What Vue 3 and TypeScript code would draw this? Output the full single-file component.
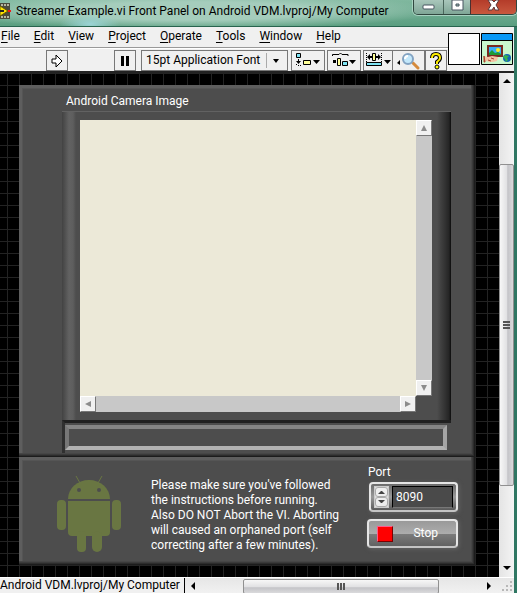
<script setup lang="ts">
import { ref } from 'vue'

const title = 'Streamer Example.vi Front Panel on Android VDM.lvproj/My Computer'
const menus = ['File', 'Edit', 'View', 'Project', 'Operate', 'Tools', 'Window', 'Help']
const port = ref('8090')
const font = ref('15pt Application Font')
const lines = [
  "Please make sure you've followed",
  'the instructions before running.',
  'Also DO NOT Abort the VI. Aborting',
  'will caused an orphaned port (self',
  'correcting after a few minutes).',
]

function step(delta: number) {
  port.value = String(Number(port.value) + delta)
}
</script>

<template>
  <div class="window">
    <header class="titlebar">
      <svg class="app-icon" width="11" height="16" viewBox="0 0 11 16">
        <path d="M0 0h10v16H0z" fill="#4a4a3c" />
        <path d="M1 1h2v2H1zM4 1h2v2H4zM7 1h2v2H7zM1 13h2v2H1zM4 13h2v2H4zM7 13h2v2H7z" fill="#b5b5a0" />
        <path d="M0 3 8 8 0 13z" fill="#ffe600" stroke="#6b5a00" />
        <path d="M8 7h3v2H8z" fill="#f01818" />
        <path d="M0 7h4v2H0z" fill="#222" />
      </svg>
      <h1>{{ title }}</h1>
      <div class="window-buttons">
        <button class="wb min" aria-label="Minimize">
          <svg width="13" height="13"><rect x="1" y="5" width="11" height="4" rx="1" fill="#fff" stroke="#485560" /></svg>
        </button>
        <button class="wb max" aria-label="Restore">
          <svg width="13" height="13"><path d="M1 0h11v10H1zM5 4v2h3V4z" fill="#fff" stroke="#485560" fill-rule="evenodd" /></svg>
        </button>
        <button class="wb close" aria-label="Close">
          <svg width="13" height="13" viewBox="0 0 13 13"><path d="M1 0h4l2 2 2-2h3L9 5l3 5H8L7 7l-2 3H1l3-5z" fill="#fff" stroke="#5b3a3c" /></svg>
        </button>
      </div>
    </header>

    <div class="body">
      <div class="tools">
        <div class="tools-main">
          <nav class="menubar">
            <a v-for="m in menus" :key="m" href="#"><u>{{ m[0] }}</u>{{ m.slice(1) }}</a>
          </nav>
          <div class="toolbar">
            <button class="tb run" aria-label="Run">
              <svg width="14" height="14"><path d="M2 5h4V1l6 6-6 6V9H2z" fill="#fff" stroke="#000" /></svg>
            </button>
            <button class="tb pause" aria-label="Pause">
              <svg width="12" height="12"><path d="M2 1h3v10H2zM7 1h3v10H7z" /></svg>
            </button>
            <div class="font-box">
              <select v-model="font" aria-label="Text settings">
                <option>15pt Application Font</option>
              </select>
              <svg width="8" height="6"><path d="M1 1h6L4 5z" /></svg>
            </div>
            <button class="tb wide" aria-label="Align objects">
              <svg width="24" height="15">
                <path d="M.5 1.500h4v4h-4z" fill="#7fe4f4" stroke="#000" />
                <path d="M2 7h1v4H2zM0 9h5l-2.500 3zM0 12h1v1H0zM2 13h1v1H2zM4 13h1v1H4z" />
                <path d="M7.500 8.500h7v4h-7z" fill="#ffff99" stroke="#000" />
                <path d="M17 8h7l-3.500 4z" />
              </svg>
            </button>
            <button class="tb wide" aria-label="Distribute objects">
              <svg width="24" height="15">
                <path d="M.5 4V2.500H7L8.500 1 10 2.500h6V4" fill="none" stroke="#000" />
                <path d="M1 8h3v3H1z" />
                <path d="M5.500 6.500h3v7h-3z" fill="#ffff99" stroke="#000" />
                <path d="M10.500 9.500h5v4h-5z" fill="#7fe4f4" stroke="#000" />
                <path d="M17 8h7l-3.500 4z" />
              </svg>
            </button>
            <button class="tb resize" aria-label="Resize objects">
              <svg width="25" height="15">
                <path d="M.5 1v9M15.500 1v9" fill="none" stroke="#000" stroke-dasharray="1 1" />
                <path d="M1 5l3-3v2h2v2H4v2zM15 5l-3-3v2h-2v2h2v2z" />
                <path d="M6.500 1.500h3v7h-3z" fill="#ffff99" stroke="#000" />
                <path d="M.5 10.500h15v3H.5z" fill="#7fe4f4" stroke="#000" />
                <path d="M18 8h7l-3.500 4z" />
              </svg>
            </button>
            <button class="tb search" aria-label="Search">
              <svg width="26" height="20" viewBox="0 0 26 20">
                <path d="M4 9v5l-3-2z" />
                <path d="m17 12 5 5" stroke="#d58a3c" stroke-width="3" stroke-linecap="round" />
                <circle cx="12" cy="8" r="5" fill="#c3e8fb" stroke="#83a3c2" stroke-width="2" />
                <path d="M9 8q0-3 3-3" fill="none" stroke="#fff" stroke-width="2" />
              </svg>
            </button>
            <button class="tb help" aria-label="Context help">
              <svg width="14" height="18" viewBox="0 0 14 18">
                <path d="M3 6q0-4 4-4t4 4q0 2-3 4v2" fill="none" stroke="#000" stroke-width="4" />
                <circle cx="8" cy="15" r="2" fill="#ff0" stroke="#000" />
                <path d="M3 6q0-4 4-4t4 4q0 2-3 4v2" fill="none" stroke="#ffee00" stroke-width="2" />
              </svg>
            </button>
          </div>
        </div>
        <div class="vi-icons">
          <div class="connector"></div>
          <svg class="vi-icon" width="32" height="32" viewBox="0 0 32 32">
            <path d="M.5.500h31v31H.5z" fill="#c9f7cd" stroke="#000" />
            <path d="M1 1h30v6H1z" fill="#0a98f5" /><path d="M1 7h30v1H1z" />
            <path d="M7 13h14v10H7z" fill="#38aef5" stroke="#7a2a20" stroke-width="2" />
            <circle cx="17" cy="17" r="2" fill="#ffee22" />
            <path d="M8 22v-2l3-3 3 3 3-1 3 2v1z" fill="#1f9b35" />
            <path d="m3 23 4 1 4-1 6 1-1 4-4 1H8l-2-1-3 1z" fill="#f3c3a4" />
            <path d="m3 23 1 6-1 0zM7 27l3 1M10 25l3 1" fill="#a8452c" stroke="#a8452c" />
            <circle cx="26" cy="25" r="4" fill="#1464b4" /><path d="m24 22 4 1-2 2 1 2-2 2-1-3-2-2z" fill="#36b34c" />
          </svg>
        </div>
      </div>

      <div class="workspace">
        <main class="canvas">
          <section class="panel camera">
            <h2>Android Camera Image</h2>
            <div class="frame">
              <div class="image"></div>
              <div class="vtrack">
                <button aria-label="Scroll image up"><svg width="8" height="8"><path d="M4 1l3 6H1z" /></svg></button>
                <button aria-label="Scroll image down"><svg width="8" height="8"><path d="M1 1h6L4 7z" /></svg></button>
              </div>
              <div class="htrack">
                <button aria-label="Scroll image left"><svg width="8" height="8"><path d="M7 1v6L1 4z" /></svg></button>
                <button aria-label="Scroll image right"><svg width="8" height="8"><path d="M1 1l6 3-6 3z" /></svg></button>
              </div>
            </div>
            <div class="status-wrap"><output class="status"></output></div>
          </section>

          <section class="panel info">
            <svg class="robot" width="68" height="78" viewBox="0 0 68 78">
              <g fill="#697642">
                <path d="M13 24a21 19 0 0 1 42 0z" />
                <path d="m21 1 4 7M47 1l-4 7" stroke="#697642" stroke-width="1" />
                <path d="M13 26h42v31q0 4-4 4H17q-4 0-4-4z" />
                <rect x="2" y="25" width="9" height="30" rx="4" />
                <rect x="57" y="25" width="9" height="30" rx="4" />
                <rect x="22" y="56" width="9" height="21" rx="4" />
                <rect x="37" y="56" width="10" height="21" rx="5" />
              </g>
              <circle cx="24" cy="15" r="2" fill="#4d4d4d" /><circle cx="44" cy="15" r="2" fill="#4d4d4d" />
            </svg>
            <p class="note"><span v-for="l in lines" :key="l">{{ l }}</span></p>
            <div class="controls">
              <label for="port">Port</label>
              <div class="port-box">
                <div class="spin">
                  <button aria-label="Increase port" @click="step(1)"><svg width="7" height="4"><path d="M0 4h7L4 1H3z" /></svg></button>
                  <button aria-label="Decrease port" @click="step(-1)"><svg width="7" height="4"><path d="M0 0h7L4 3H3z" /></svg></button>
                </div>
                <input id="port" v-model="port" type="text" />
              </div>
              <button class="stop"><i></i><span>Stop</span></button>
            </div>
          </section>
        </main>
        <div class="vscroll">
          <button aria-label="Scroll up"><svg width="8" height="5"><path d="M4 0l4 4H0z" /></svg></button>
          <div class="gap-top"></div>
          <div class="thumb"><i></i></div>
          <div class="gap-bottom"></div>
          <button aria-label="Scroll down"><svg width="8" height="5"><path d="M0 0h8L4 4z" /></svg></button>
        </div>
      </div>

      <footer class="bottom">
        <a class="context" href="#">Android VDM.lvproj/My Computer</a>
        <button aria-label="Scroll left"><svg width="5" height="8"><path d="M4 0v8L0 4z" /></svg></button>
        <div class="gap-left"></div>
        <div class="thumb"><i></i></div>
        <div class="gap-right"></div>
        <button aria-label="Scroll right"><svg width="5" height="8"><path d="M0 0l4 4-4 4z" /></svg></button>
        <svg class="grip" width="12" height="12"><path d="M9 1h2v2H9zM9 5h2v2H9zM5 5h2v2H5zM9 9h2v2H9zM5 9h2v2H5zM1 9h2v2H1z" fill="#b8b8b8" /></svg>
      </footer>
    </div>
  </div>
</template>

<style>
body {
  background: #000;
}
</style>

<style scoped>
* {
  box-sizing: border-box;
}
.window {
  min-height: 100vh;
  display: flex;
  flex-direction: column;
  overflow: hidden;
  font-family: Roboto, 'Open Sans', sans-serif;
  font-size: 12px;
  line-height: 15px;
  color: #000;
}
button {
  margin: 0;
  padding: 0;
  border: 0;
  background: none;
  font: inherit;
  color: inherit;
  display: flex;
  align-items: center;
  justify-content: center;
}
svg {
  display: block;
  flex: none;
}
a {
  color: inherit;
  text-decoration: none;
}

.titlebar {
  height: 27px;
  display: flex;
  align-items: flex-start;
  background:
    radial-gradient(ellipse 30px 10px at 90px 24px, #9bd4d6, transparent),
    radial-gradient(ellipse 250px 18px at 190px 11px, #a5cdbc 50%, transparent 100%),
    linear-gradient(#80b89f, #5a9e80);
  border-bottom: 1px solid #27634e;
}
.app-icon {
  margin-top: 3px;
}
h1 {
  margin: 3px 0 0 5px;
  flex: 1;
  min-width: 0;
  font-size: 12px;
  font-weight: 400;
  line-height: 16px;
  white-space: nowrap;
}
.window-buttons {
  display: flex;
  height: 15px;
  border: 1px solid #31473f;
  border-top: 0;
  border-radius: 0 0 5px 5px;
  overflow: hidden;
  box-shadow: 0 0 0 1px #a8d3c1;
}
.wb {
  height: 14px;
  align-items: flex-start;
  background: linear-gradient(#a9c6bb, #7fa696);
}
.min {
  width: 29px;
}
.max {
  width: 27px;
  border-left: 1px solid #4a665b;
}
.close {
  width: 46px;
  border-left: 1px solid #4a3030;
  background: linear-gradient(#b43c2a, #c8583e);
}

.body {
  flex: 1;
  display: flex;
  flex-direction: column;
  background: #f0f0f0;
  border-right: 3px solid #2f7763;
}
.tools {
  height: 46px;
  display: flex;
  border-bottom: 2px solid #222;
}
.tools-main {
  flex: 1;
  min-width: 0;
}
.menubar {
  height: 21px;
  display: flex;
  gap: 14px;
  padding: 2px 1px 0;
  border-bottom: 1px solid #999;
  white-space: nowrap;
}
u {
  text-underline-offset: 2px;
}
.toolbar {
  height: 23px;
  display: flex;
  align-items: center;
  padding: 1px 0 0 46px;
  border-top: 1px solid #fff;
}
.tb {
  height: 21px;
  flex: none;
  border: 1px solid #777;
}
.run {
  width: 22px;
}
.pause {
  width: 22px;
  margin-left: 46px;
}
.font-box {
  width: 147px;
  height: 21px;
  flex: none;
  margin: 0 3px 0 5px;
  display: flex;
  align-items: center;
  border: 1px solid #777;
}
.font-box select {
  appearance: none;
  flex: 1;
  height: 15px;
  margin: 0 5px 0 0;
  padding: 0 0 0 4px;
  border: 0;
  border-right: 1px solid #aaa;
  border-radius: 0;
  background: none;
  font: inherit;
  line-height: 15px;
  color: #000;
}
.font-box svg {
  margin-right: 7px;
}
.wide {
  width: 34px;
  margin-right: 2px;
  padding-bottom: 2px;
}
.resize {
  width: 29px;
  border-right: 0;
  padding-bottom: 2px;
}
.search {
  width: 33px;
}
.help {
  width: 22px;
}
.vi-icons {
  display: flex;
  gap: 1px;
  padding: 6px 1px 0 0;
}
.connector {
  width: 32px;
  height: 32px;
  background: #fff;
  border: 1px solid #000;
}

.workspace {
  flex: 1;
  display: flex;
}
.canvas {
  flex: 1;
  min-width: 0;
  padding: 12px 24px 12px 19px;
  background:
    repeating-linear-gradient(90deg, transparent 0 7px, #232323 7px 8px, transparent 8px 12px),
    repeating-linear-gradient(#232323 0 1px, transparent 1px 12px),
    #000;
  color: #fff;
}
.panel {
  background: #4d4d4d;
  padding: 4px;
  box-shadow:
    inset -1px -1px #1c1c1c,
    inset -2px -2px #2c2c2c,
    inset -3px -3px #3a3a3a,
    inset -4px -4px #464646,
    inset 3px 3px #5e5e5e,
    inset 4px 4px #555;
}
.camera {
  height: 372px;
}
h2 {
  margin: 0;
  height: 22px;
  padding: 5px 0 0 43px;
  font-size: 12px;
  font-weight: 400;
  line-height: 15px;
}
.frame {
  height: 309px;
  margin: 0 20px 0 39px;
  padding: 8px 19px 8px 18px;
  display: grid;
  grid-template: 276px 16px / 1fr 16px;
  border-top: 1px solid #626262;
  background:
    linear-gradient(90deg, #424242, #626262 7px, #5e5e5e 11px, transparent 14px) left / 14px 100% no-repeat,
    linear-gradient(90deg, #4d4d4d, #252525 12px, #0c0c0c) right / 14px 100% no-repeat,
    #4d4d4d;
}
.image {
  background: #ece9d8;
}
.vtrack,
.htrack {
  display: flex;
  justify-content: space-between;
  background: #c8c8c8;
}
.vtrack {
  flex-direction: column;
}
.vtrack button,
.htrack button {
  width: 16px;
  height: 16px;
  background: #f0f0f0;
  border: 1px solid;
  border-color: #fff #777 #777 #fff;
  fill: #8c8c8c;
}
.status-wrap {
  height: 33px;
  margin: 0 20px 0 39px;
  padding: 2px 4px 3px 0;
  border-top: 3px solid #202020;
  border-left: 3px solid #303030;
}
.status {
  display: block;
  height: 25px;
  border: 4px solid;
  border-color: #858585 #a5a5a5 #b2b2b2 #777;
}
.info {
  height: 108px;
  display: flex;
  align-items: flex-start;
  padding-left: 36px;
}
.robot {
  margin-top: 14px;
}
.note {
  flex: 1;
  margin: 17px 0 0 28px;
  display: flex;
  flex-direction: column;
  white-space: nowrap;
}
.controls {
  width: 91px;
  margin-right: 13px;
  padding-top: 4px;
}
.controls label {
  display: block;
  padding-left: 1px;
}
.port-box {
  height: 30px;
  margin: 2px 0 7px 2px;
  padding: 2px 3px;
  display: flex;
  gap: 3px;
  border: 2px solid #e6e6e6;
  border-bottom-color: #c4c4c4;
  border-radius: 4px;
  background: linear-gradient(#6b6b6b, #999 50%, #5a5a5a);
  box-shadow: 1px 1px 4px #666;
}
.spin {
  width: 15px;
  display: flex;
  flex-direction: column;
  background: #ddd;
  border: 1px solid #ccc;
}
.spin button {
  flex: 1;
  background: #eee;
  border: 1px solid #aaa;
  border-radius: 3px;
  fill: #444;
}
.port-box input {
  flex: 1;
  min-width: 0;
  padding: 0 0 0 3px;
  border: 1px solid #000;
  border-bottom-color: #777;
  background: #4a4a4a;
  color: #fff;
  font: inherit;
}
.stop {
  width: 91px;
  height: 29px;
  padding: 0 18px 0 8px;
  justify-content: space-between;
  border: 2px solid #e6e6e6;
  border-bottom-color: #c4c4c4;
  border-radius: 4px;
  background: linear-gradient(#999, #adadad 52%, #7b7b7b 53%, #626262);
  box-shadow: 1px 1px 4px #666;
}
.stop i {
  width: 16px;
  height: 16px;
  background: #f00;
  border: 1px solid;
  border-color: #ff5a8a #7a0000 #7a0000 #ff5a8a;
}

.vscroll {
  width: 15px;
  display: flex;
  flex-direction: column;
  background: linear-gradient(90deg, #e4e4e4, #f4f4f4);
}
.vscroll button {
  height: 17px;
}
.gap-top {
  flex: 74;
}
.vscroll .thumb {
  flex: 321;
}
.gap-bottom {
  flex: 74;
}
.thumb {
  display: flex;
  align-items: center;
  justify-content: center;
  border: 1px solid #909090;
  border-radius: 2px;
}
.vscroll .thumb {
  background: linear-gradient(90deg, #f7f7f7, #e2e2e4 50%, #c4c4c8 60%, #dadadc);
}
.vscroll i {
  width: 7px;
  height: 8px;
  background: repeating-linear-gradient(#555 0 2px, transparent 2px 3px);
}
.bottom {
  height: 17px;
  display: flex;
  align-items: center;
  background: linear-gradient(#e6e6e6, #f2f2f2);
  border-top: 1px solid #fff;
}
.context {
  width: 185px;
  height: 16px;
  overflow: hidden;
  white-space: nowrap;
  background: #f0f0f0;
  border-right: 1px solid #000;
}
.bottom button {
  width: 17px;
  height: 16px;
}
.gap-left {
  flex: 41;
}
.bottom .thumb {
  flex: 197;
  height: 15px;
  background: linear-gradient(#f7f7f7, #e2e2e4 50%, #c4c4c8 60%, #dadadc);
}
.gap-right {
  flex: 42;
}
.bottom i {
  width: 8px;
  height: 7px;
  background: repeating-linear-gradient(90deg, #555 0 2px, transparent 2px 3px);
}
.grip {
  margin: 0 1px 0 3px;
}
</style>
